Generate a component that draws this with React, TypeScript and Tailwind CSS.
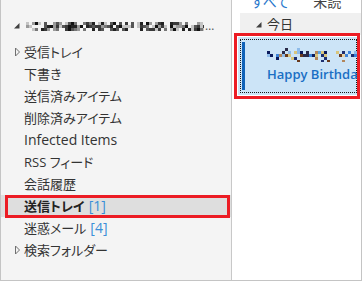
import React from "react";

function rng(seed: number) {
  let s = seed >>> 0;
  return () => {
    s = (s * 1664525 + 1013904223) >>> 0;
    return s / 4294967296;
  };
}

function Mosaic({
  w,
  h,
  cell,
  palette,
  seed,
  density,
  rowWeights,
}: {
  w: number;
  h: number;
  cell: number;
  palette: string[];
  seed: number;
  density: number;
  rowWeights?: number[];
}) {
  const r = rng(seed);
  const rects: React.ReactElement[] = [];
  const cols = Math.ceil(w / cell);
  const rows = Math.ceil(h / cell);
  for (let y = 0; y < rows; y++) {
    for (let x = 0; x < cols; x++) {
      const d = rowWeights ? rowWeights[y] ?? density : density;
      if (r() < d) {
        const c = palette[Math.floor(r() * palette.length)];
        rects.push(
          <rect key={`${x}-${y}`} x={x * cell} y={y * cell} width={cell} height={cell} fill={c} />
        );
      } else {
        r();
      }
    }
  }
  return (
    <svg width={w} height={h} viewBox={`0 0 ${w} ${h}`} className="block shrink-0">
      {rects}
    </svg>
  );
}

function TriOpen() {
  return (
    <svg width="7" height="10" viewBox="0 0 7 10" className="block">
      <path d="M1.5 1 L5.5 5 L1.5 9 Z" fill="none" stroke="#707070" strokeWidth="1" />
    </svg>
  );
}

function TriExpanded() {
  return (
    <svg width="6" height="6" viewBox="0 0 6 6" className="block">
      <polygon points="5.5,0 5.5,5.5 0,5.5" fill="#404040" />
    </svg>
  );
}

type Row = {
  label: string;
  tri?: boolean;
  count?: string;
  selected?: boolean;
  latin?: boolean;
};

const rows: Row[] = [
  { label: "受信トレイ", tri: true },
  { label: "下書き" },
  { label: "送信済みアイテム" },
  { label: "削除済みアイテム" },
  { label: "Infected Items", latin: true },
  { label: "RSS フィード" },
  { label: "会話履歴" },
  { label: "送信トレイ", count: "[1]", selected: true },
  { label: "迷惑メール", count: "[4]" },
  { label: "検索フォルダー", tri: true },
];

const font = "font-['Open_Sans','Noto_Sans_CJK_JP',sans-serif] [font-feature-settings:'palt']";

export default function App() {
  return (
    <div
      className={`w-[362px] h-[281px] flex border-l border-r border-b border-[#c4c4c4] bg-white overflow-hidden ${font}`}
    >
      {/* Left folder pane */}
      <div className="w-[231px] shrink-0 h-full bg-[#f4f4f4] border-r border-[#c8c8c8] pt-[15px] flex flex-col">
        <div className="h-[22px] flex items-center pl-[13px]">
          <div className="w-[12px] flex items-center">
            <TriExpanded />
          </div>
          <Mosaic
            w={178}
            h={9}
            cell={3}
            seed={7}
            density={0.7}
            rowWeights={[0.55, 0.85, 0.65]}
            palette={["#111111", "#222222", "#3a3a3a", "#555555", "#777777", "#9a9a9a", "#c4c4c4"]}
          />
          <span className="text-[12px] text-[#555] leading-none ml-[1px]">…</span>
        </div>
        <div className="mt-[4px] flex flex-col">
          {rows.map((row) => (
            <div
              key={row.label}
              className={`relative h-[22px] flex items-center pl-[13px] ${
                row.selected ? "bg-[#dedede]" : ""
              }`}
            >
              <div className="w-[10px] flex items-center">{row.tri ? <TriOpen /> : null}</div>
              <span
                className={`${row.latin ? "text-[14px]" : "text-[13px]"} leading-none whitespace-nowrap ${
                  row.selected ? "font-bold text-[#222]" : "text-[#333]"
                }`}
              >
                {row.label}
              </span>
              {row.count ? (
                <span className="text-[14px] leading-none text-[#3a8fd8] ml-[4px] font-normal">
                  {row.count}
                </span>
              ) : null}
              {row.selected ? (
                <div className="absolute left-[4px] right-[1px] top-0 -bottom-[1px] border-[3px] border-[#ec1c24] pointer-events-none" />
              ) : null}
            </div>
          ))}
        </div>
      </div>

      {/* Right message list pane */}
      <div className="flex-1 min-w-0 h-full flex flex-col">
        <div className="h-[13px] overflow-hidden">
          <div className="-mt-[5px] h-[18px] flex items-start pl-[19px] text-[14px] leading-[14px] whitespace-nowrap">
            <span className="text-[#2a78cc]">すべて</span>
            <span className="text-[#444] ml-[24px]">未読</span>
          </div>
        </div>
        <div className="ml-[8px] h-[22px] bg-[#f0f0f0] flex items-center pl-[16px]">
          <div className="w-[11px] flex items-center pt-[2px]">
            <TriExpanded />
          </div>
          <span className="text-[13px] leading-none text-[#333]">今日</span>
        </div>
        <div className="relative ml-[6px] mr-[2px] mt-[2px] h-[58px]">
          <div className="absolute inset-0 overflow-hidden bg-[#cce4f7]">
            <div className="absolute inset-[2px] border border-dotted border-[#1a1a1a]" />
            <div className="absolute left-[4px] top-[5px] bottom-[5px] w-[3px] bg-[#1062b8]" />
            <div className="absolute left-[29px] top-[11px] right-0 flex flex-col">
              <Mosaic
                w={94}
                h={14}
                cell={3}
                seed={21}
                density={0.4}
                rowWeights={[0.15, 0.4, 0.5, 0.2, 0.05]}
                palette={[
                  "#0b1a5c",
                  "#1d2f70",
                  "#3d83d9",
                  "#8ebbe9",
                  "#b3865a",
                  "#6a3a1c",
                  "#d9c57c",
                  "#e9d2a4",
                  "#2a2a48",
                  "#5aa2e2",
                ]}
              />
              <span className="mt-[3px] text-[13px] leading-[18px] font-semibold text-[#1a6fc4] whitespace-nowrap">
                Happy Birthday!
              </span>
            </div>
          </div>
          <div className="absolute -top-[4px] -left-[4px] -right-[1px] -bottom-[4px] border-[3px] border-[#ec1c24] pointer-events-none" />
        </div>
      </div>
    </div>
  );
}
